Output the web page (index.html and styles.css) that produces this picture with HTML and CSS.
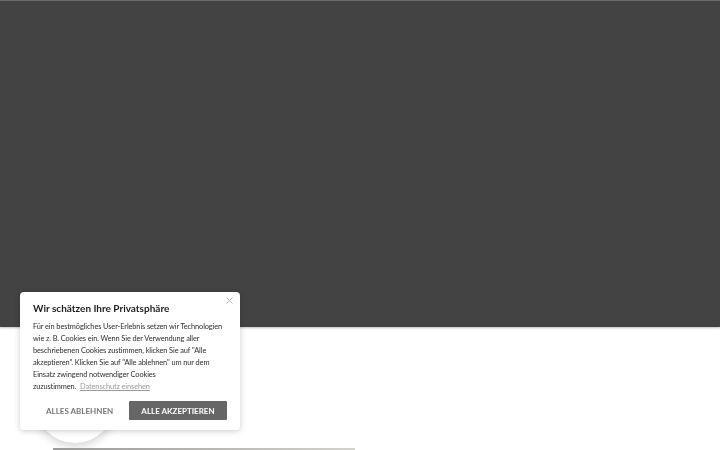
FILE: index.html
```html
<!DOCTYPE html>
<html lang="de">
<head>
<meta charset="utf-8">
<title>Profil</title>
<link rel="stylesheet" href="styles.css">
</head>
<body>
<header class="hero"></header>
<main class="content">
  <div class="avatar"></div>
  <div class="rule"></div>
</main>

<div class="cookie-box" role="dialog" aria-label="Cookie-Einstellungen">
  <button class="cookie-close" aria-label="Schließen">
    <svg width="7" height="7" viewBox="0 0 7 7"><path d="M0.5 0.5L6.5 6.5M6.5 0.5L0.5 6.5" stroke="#b5b5b5" stroke-width="1"/></svg>
  </button>
  <h2 class="cookie-title">Wir schätzen Ihre Privatsphäre</h2>
  <p class="cookie-text">Für ein bestmögliches User-Erlebnis setzen wir Technologien wie z.&nbsp;B. Cookies ein. Wenn Sie der Verwendung aller beschriebenen Cookies zustimmen, klicken Sie auf "Alle akzeptieren". Klicken Sie auf "Alle ablehnen" um nur dem Einsatz zwingend notwendiger Cookies<br>zuzustimmen. <a href="#" class="cookie-link">Datenschutz einsehen</a></p>
  <div class="cookie-actions">
    <button class="btn btn-plain">ALLES ABLEHNEN</button>
    <button class="btn btn-solid">ALLE AKZEPTIEREN</button>
  </div>
</div>
</body>
</html>
```
FILE: styles.css
```css
html, body {
  margin: 0;
  padding: 0;
  background: #ffffff;
  font-family: Lato, "Open Sans", sans-serif;
  overflow: hidden;
  height: 450px;
}

.hero {
  height: 326px;
  background: #434343;
  border-top: 1px solid #6c6c6c;
  box-shadow: 0 1px 2px rgba(0, 0, 0, 0.25);
}

.content {
  padding: 36px 0 0 0;
}

.avatar {
  width: 80px;
  height: 80px;
  margin-left: 35px;
  border-radius: 50%;
  background: #ffffff;
  box-shadow: 0 3px 10px rgba(0, 0, 0, 0.18);
}

.rule {
  width: 302px;
  height: 2px;
  margin: 5px 0 0 53px;
  background: linear-gradient(90deg, #9a9a9a, #d4d2cc);
}

.cookie-box {
  position: fixed;
  left: 20px;
  top: 292px;
  width: 220px;
  height: 138px;
  box-sizing: border-box;
  padding: 9px 13px 0 13px;
  background: #ffffff;
  border-radius: 4px;
  box-shadow: 0 1px 6px rgba(0, 0, 0, 0.2);
}

.cookie-close {
  position: absolute;
  top: 5px;
  right: 7px;
  padding: 0;
  border: 0;
  background: none;
  line-height: 0;
}

.cookie-title {
  margin: 0;
  font-size: 10px;
  font-weight: 700;
  line-height: 15px;
  color: #1e1e1e;
}

.cookie-text {
  margin: 5px 0 0 0;
  font-size: 7.4px;
  letter-spacing: -0.1px;
  line-height: 12px;
  color: #2e2e2e;
}

.cookie-link {
  margin-left: 2px;
  color: #9a9a9a;
  text-decoration: underline;
}

.cookie-actions {
  display: flex;
  align-items: center;
  justify-content: space-between;
  margin-top: 8px;
}

.btn {
  font-family: inherit;
  font-size: 8px;
  font-weight: 700;
  letter-spacing: 0;
  border: 0;
  border-radius: 1px;
  height: 19px;
  cursor: pointer;
}

.btn-plain {
  background: none;
  color: #777777;
  padding: 0 0 0 13px;
}

.btn-solid {
  background: #666666;
  color: #ffffff;
  width: 98px;
}
```
